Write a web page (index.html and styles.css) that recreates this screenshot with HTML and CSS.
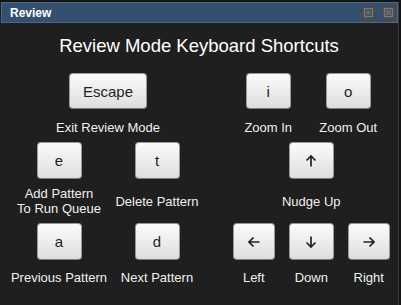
FILE: index.html
```html
<!DOCTYPE html>
<html lang="en">
<head>
    <meta charset="UTF-8">
    <meta name="viewport" content="width=device-width, initial-scale=1.0">
    <title>Review</title>
    <link rel="stylesheet" href="styles.css">
</head>
<body>

<div class="window">
    <div class="titlebar">
        <span class="title">Review</span>
        <div class="title-buttons">
            <span class="tb-btn">
                <svg width="11" height="11" viewBox="0 0 11 11"><rect x="1.5" y="1.5" width="8" height="8" fill="none" stroke="#7a7a7a" stroke-width="1.3"/><rect x="3.5" y="3.5" width="4" height="4" fill="#6a6a6a"/></svg>
            </span>
            <span class="tb-btn">
                <svg width="11" height="11" viewBox="0 0 11 11"><rect x="1.5" y="1.5" width="8" height="8" fill="none" stroke="#7a7a7a" stroke-width="1.3"/><path d="M3 3 L8 8 M8 3 L3 8" stroke="#7a7a7a" stroke-width="1.3"/></svg>
            </span>
        </div>
    </div>

    <h1 class="heading">Review Mode Keyboard Shortcuts</h1>

    <div class="shortcuts">
        <!-- left side: review / pattern keys -->
        <div class="panel panel-left">
            <div class="cell span-2 r1"><button class="key wide">Escape</button></div>
            <div class="label span-2 r2 lift">Exit Review Mode</div>

            <div class="cell r3"><button class="key">e</button></div>
            <div class="cell r3"><button class="key">t</button></div>
            <div class="label r4">Add Pattern<br>To Run Queue</div>
            <div class="label r4">Delete Pattern</div>

            <div class="cell r5"><button class="key">a</button></div>
            <div class="cell r5"><button class="key">d</button></div>
            <div class="label r6">Previous Pattern</div>
            <div class="label r6">Next Pattern</div>
        </div>

        <!-- right side: zoom and nudge keys -->
        <div class="panel panel-right">
            <div class="zoom-row span-3 r1">
                <button class="key">i</button>
                <button class="key">o</button>
            </div>
            <div class="zoom-row span-3 r2 lift">
                <span class="zoom-label">Zoom In</span>
                <span class="zoom-label">Zoom Out</span>
            </div>

            <div class="cell col-2 r3">
                <button class="key">
                    <svg width="12" height="12" viewBox="0 0 12 12"><path d="M6 11.5 V1 M1.5 5.5 L6 1 L10.5 5.5" fill="none" stroke="#222" stroke-width="1.7"/></svg>
                </button>
            </div>
            <div class="label col-2 r4">Nudge Up</div>

            <div class="cell r5">
                <button class="key arrow">
                    <svg width="12" height="12" viewBox="0 0 12 12"><path d="M11.5 6 H1 M5.5 1.5 L1 6 L5.5 10.5" fill="none" stroke="#222" stroke-width="1.7"/></svg>
                </button>
            </div>
            <div class="cell r5">
                <button class="key">
                    <svg width="12" height="12" viewBox="0 0 12 12"><path d="M6 0.5 V11 M1.5 6.5 L6 11 L10.5 6.5" fill="none" stroke="#222" stroke-width="1.7"/></svg>
                </button>
            </div>
            <div class="cell r5">
                <button class="key arrow">
                    <svg width="12" height="12" viewBox="0 0 12 12"><path d="M0.5 6 H11 M6.5 1.5 L11 6 L6.5 10.5" fill="none" stroke="#222" stroke-width="1.7"/></svg>
                </button>
            </div>
            <div class="label r6">Left</div>
            <div class="label r6">Down</div>
            <div class="label r6">Right</div>
        </div>
    </div>
</div>

</body>
</html>
```

FILE: styles.css
```css
/* general */
body {
    margin: 0;
    padding: 0;
    width: 401px;
    height: 305px;
    overflow: hidden;
    background-color: #141414;
    font-family: 'Liberation Sans', Arial, sans-serif;
    color: #f0f0f0;
}

.window {
    height: 303px;
    margin-top: 2px;
    margin-right: 2px;
    background-color: #1f1f1f;
    border-right: 1px solid #3a3a3a;
}

.titlebar {
    height: 19px;
    margin-left: 1px;
    background-color: #34506f;
    border: 1px solid #4b6887;
    display: flex;
    align-items: center;
    justify-content: space-between;
}

.title {
    font-size: 12px;
    font-weight: bold;
    color: #fff;
    padding-left: 8px;
}

.title-buttons {
    display: flex;
    gap: 5px;
    padding-right: 1px;
}

.tb-btn {
    width: 15px;
    height: 16px;
    background-color: #474b51;
    border-radius: 2px;
    display: flex;
    align-items: center;
    justify-content: center;
}

.heading {
    margin: 12px 0 0 0;
    font-size: 18.5px;
    line-height: 22px;
    font-weight: normal;
    text-align: center;
    color: #fff;
}

.shortcuts {
    display: flex;
    margin-top: 16px;
    padding-left: 10px;
    gap: 19px;
}

.panel {
    display: grid;
    grid-template-rows: 36px 33px 37px 44px 37px 34px;
}

.panel-left {
    grid-template-columns: 98px 98px;
}

.panel-right {
    grid-template-columns: 57.5px 57.5px 57.5px;
}

.r1 { grid-row: 1; }
.r2 { grid-row: 2; }
.r3 { grid-row: 3; }
.r4 { grid-row: 4; }
.r5 { grid-row: 5; }
.r6 { grid-row: 6; }
.span-2 { grid-column: 1 / span 2; }
.span-3 { grid-column: 1 / span 3; }
.col-2 { grid-column: 2; }

.cell {
    display: flex;
    justify-content: center;
}

.label, .zoom-label {
    font-size: 13px;
    line-height: 15px;
    text-align: center;
    white-space: nowrap;
    align-self: center;
    justify-self: center;
}

.lift {
    padding-top: 3px;
}

.zoom-row {
    display: flex;
    justify-content: center;
    gap: 35px;
    padding-right: 6px;
}

.zoom-row.r2 {
    gap: 0;
    align-self: center;
}

.zoom-label {
    width: 80px;
}

.key {
    width: 45px;
    height: 100%;
    padding: 0;
    margin: 0;
    border: 1px solid #9a9a9a;
    border-bottom-color: #7c7c7c;
    border-radius: 4px;
    background: linear-gradient(#fbfbfb, #dedede);
    font-family: 'Liberation Sans', Arial, sans-serif;
    font-size: 15px;
    color: #1e1e1e;
    display: flex;
    align-items: center;
    justify-content: center;
    cursor: pointer;
}

.key.wide {
    width: 78px;
}

.key.arrow {
    width: 42px;
}
```
